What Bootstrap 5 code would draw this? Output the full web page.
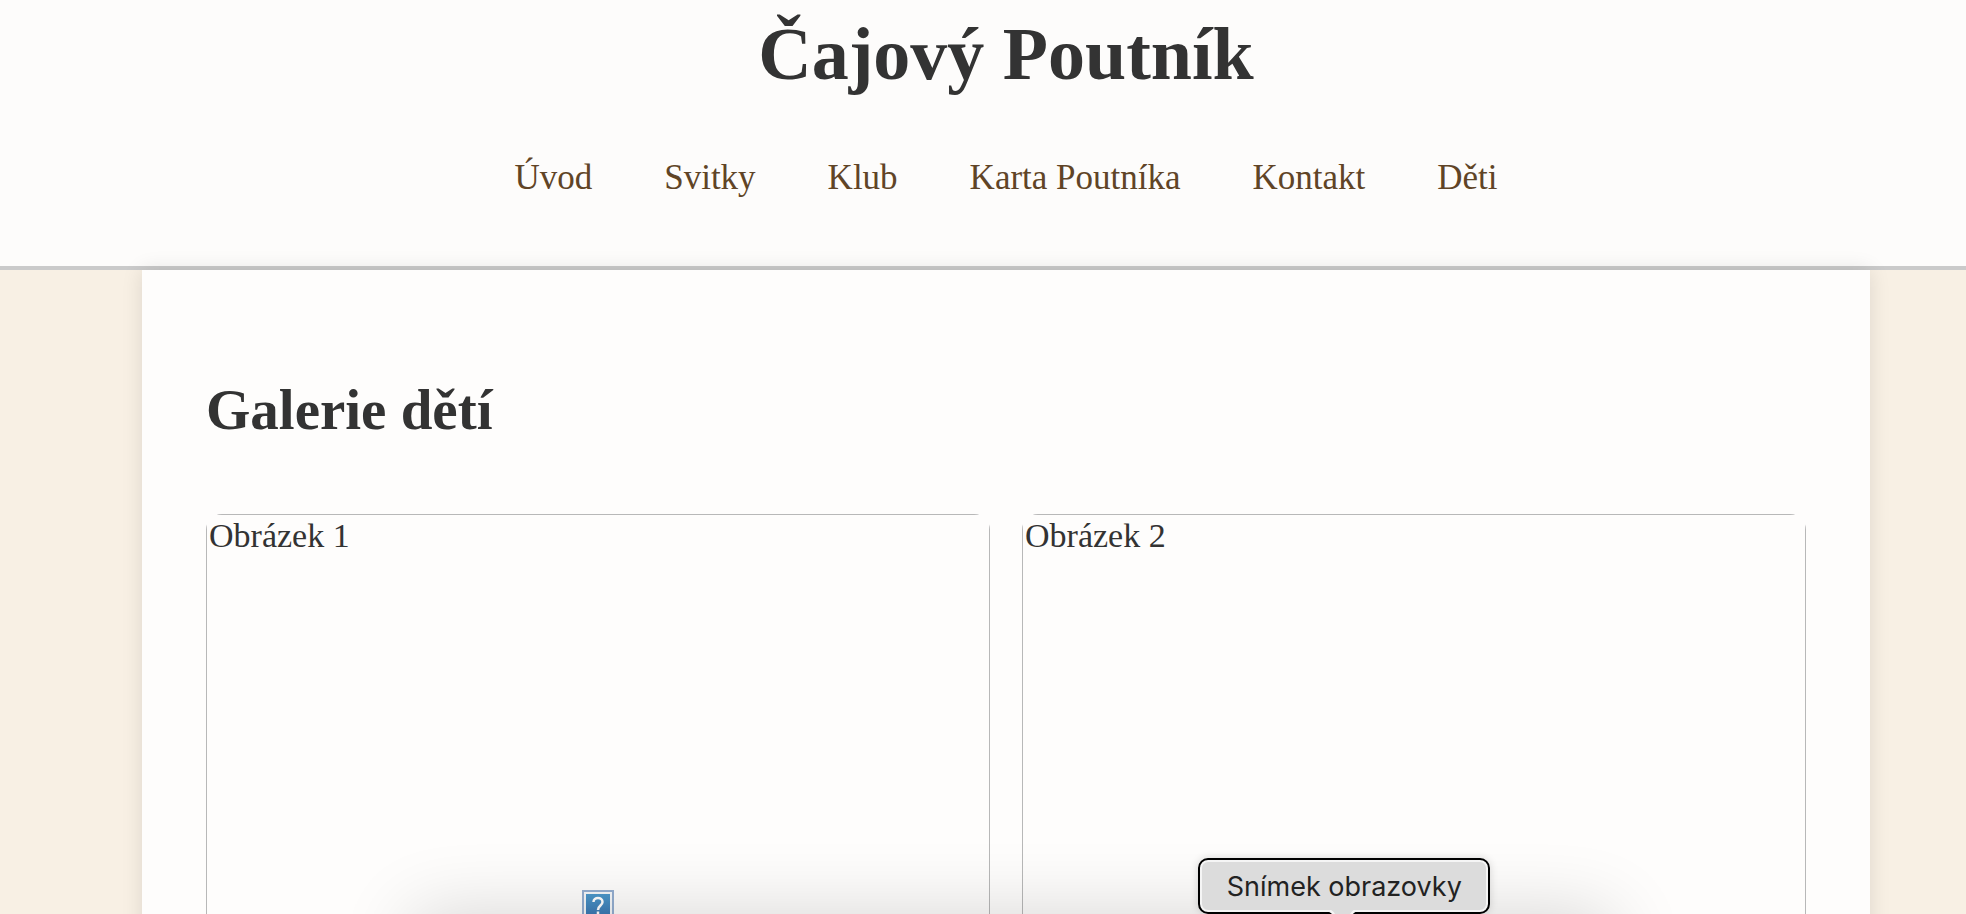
<!DOCTYPE html>
<html lang="cs">
<head>
<meta charset="utf-8">
<meta name="viewport" content="width=device-width, initial-scale=1">
<title>Čajový Poutník</title>
<link rel="stylesheet" href="https://cdn.jsdelivr.net/npm/bootstrap@5.3.0/dist/css/bootstrap.min.css">
<style>
  body { background: #f8f0e4; color: #333; font-family: "Liberation Serif", serif; }
  .site-shell { height: 100vh; }
  .site-header { padding: 10px 0 64px 46px; background: #fdfcfb; border-bottom: 4px solid #cacaca; }
  .site-title { margin-bottom: 56px; font-size: 74px; line-height: 88px; }
  .site-menu { column-gap: 72px; font-size: 35px; line-height: 48px; }
  .site-menu a { color: #604426; }
  .page-wrap { padding-left: 46px; }
  .page-sheet { width: 90%; padding: 108px 64px 64px; background: #fefdfc; box-shadow: 0 0 20px rgba(10, 20, 0, .11); }
  .page-heading { margin-bottom: 72px; font-size: 57px; line-height: 64px; }
  .gallery { --bs-gutter-x: 32px; }
  .photo { border-radius: 16px; }
  .photo-frame { border: 1px solid #b8b8b8; }
  .photo-label { top: 0; left: 0; padding: 1px 2px; font-size: 34px; line-height: 40px; }
  .dock-shadow { top: 100%; left: 21%; right: 18%; height: 100px; box-shadow: 0 0 75px rgba(0, 0, 0, .16); }
  .hint { bottom: 0; left: 61%; width: 292px; height: 56px; margin-left: -1px; padding: 0; border: 2px solid #000; border-radius: 10px;
          background: #dcdcdc; box-shadow: inset 0 0 0 2px #f5f5f5, 0 0 8px rgba(0, 0, 0, .15);
          color: #222; font-family: Inter, sans-serif; font-size: 27px; line-height: 53px; }
  .hint-notch { bottom: -2px; left: 124px; }
</style>
</head>
<body>
<div class="site-shell position-relative overflow-hidden">
  <header class="site-header text-center">
    <h1 class="site-title fw-bold">Čajový Poutník</h1>
    <nav aria-label="Hlavní nabídka">
      <ul class="site-menu list-unstyled d-flex flex-wrap justify-content-center mb-0">
        <li><a class="text-decoration-none" href="#uvod">Úvod</a></li>
        <li><a class="text-decoration-none" href="#svitky">Svitky</a></li>
        <li><a class="text-decoration-none" href="#klub">Klub</a></li>
        <li><a class="text-decoration-none" href="#karta">Karta Poutníka</a></li>
        <li><a class="text-decoration-none" href="#kontakt">Kontakt</a></li>
        <li><a class="text-decoration-none" href="#deti">Děti</a></li>
      </ul>
    </nav>
  </header>
  <div class="page-wrap">
    <main class="page-sheet position-relative mx-auto">
      <h2 class="page-heading fw-bold">Galerie dětí</h2>
      <div class="gallery row row-cols-2">
        <div class="col">
          <div class="photo ratio ratio-1x1 overflow-hidden">
            <div class="photo-frame d-flex align-items-center justify-content-center">
              <span class="photo-label position-absolute">Obrázek 1</span>
              <svg width="32" height="32" viewBox="0 0 32 32" aria-hidden="true">
                <defs><linearGradient id="tile" x2="0" y2="1"><stop stop-color="#4c98ca"/><stop offset="1" stop-color="#3a74b0"/></linearGradient></defs>
                <rect x="1" y="1" width="30" height="30" fill="#f5f7f9" stroke="#94aed0" stroke-width="2"/>
                <rect x="4" y="4" width="24" height="24" fill="url(#tile)"/>
                <path d="M11.500 12C11.500 6.500 20.500 6.500 20.500 12C20.500 15.500 16 15.500 16 20M16 21.500V24.500" fill="none" stroke="#fff" stroke-width="2.500"/>
              </svg>
            </div>
          </div>
        </div>
        <div class="col">
          <div class="photo ratio ratio-1x1 overflow-hidden">
            <div class="photo-frame">
              <span class="photo-label position-absolute">Obrázek 2</span>
            </div>
          </div>
        </div>
      </div>
    </main>
  </div>
  <div class="dock-shadow position-absolute"></div>
  <div class="hint position-absolute text-center" role="tooltip">Snímek obrazovky
    <svg class="hint-notch position-absolute" width="36" height="5" viewBox="0 0 36 5" aria-hidden="true">
      <path d="M0 1H36V2C32 2 31 3 29 5H8C6 3 4 2 0 2Z" fill="#f5f5f5"/>
      <path d="M5 0H31C29 2 27 3 26 5H11C10 3 8 1 5 0Z" fill="#dcdcdc"/>
    </svg>
  </div>
</div>
<script src="https://cdn.jsdelivr.net/npm/bootstrap@5.3.0/dist/js/bootstrap.bundle.min.js"></script>
</body>
</html>
